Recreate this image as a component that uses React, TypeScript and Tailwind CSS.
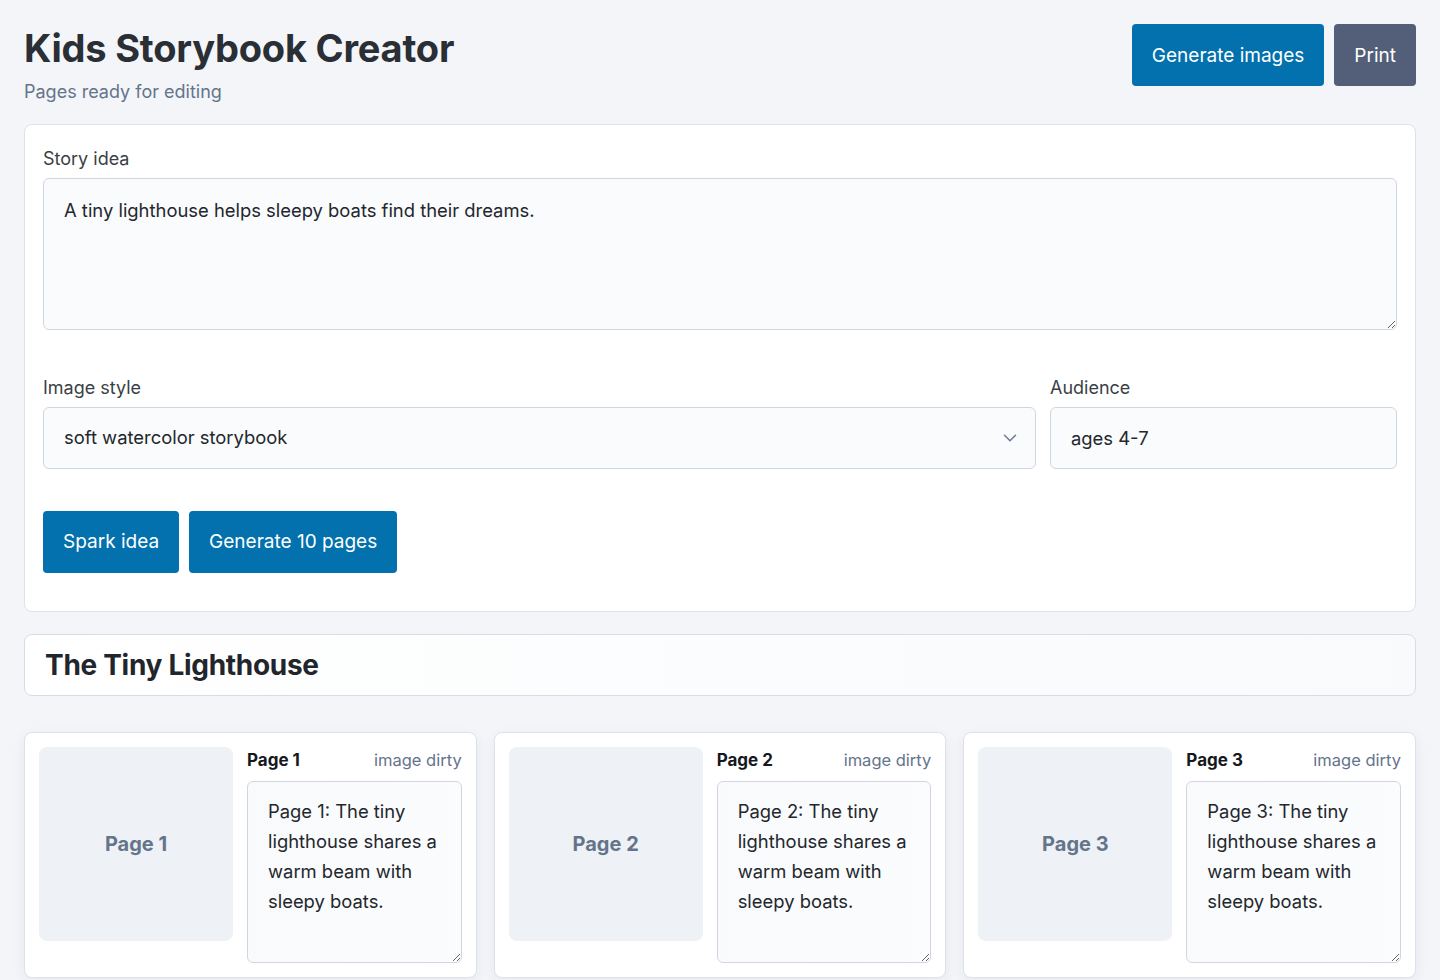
import React from "react";
import { ChevronDown } from "lucide-react";

const pages = [1, 2, 3];

const App = () => {
  return (
    <div
      className="min-h-screen bg-[#f3f5f9] px-6 pt-6 pb-10 text-[#2b3036]"
      style={{ fontFamily: "Inter, 'Noto Sans', sans-serif" }}
    >
      {/* Header */}
      <div className="flex items-start justify-between">
        <div>
          <h1 className="text-[38px] font-bold leading-[48px] tracking-[-0.2px] text-[#2a2e35]">
            Kids Storybook Creator
          </h1>
          <p className="mt-[7px] text-[18px] leading-[26px] text-[#64748b]">Pages ready for editing</p>
        </div>
        <div className="flex gap-[10px]">
          <button className="h-[62px] px-5 pt-[2px] rounded-[4px] bg-[#0271ad] text-white text-[19px]">
            Generate images
          </button>
          <button className="h-[62px] px-5 pt-[2px] rounded-[4px] bg-[#535f79] text-white text-[19px]">
            Print
          </button>
        </div>
      </div>

      {/* Story settings */}
      <div className="mt-[19px] bg-white border border-[#dde3eb] rounded-lg px-[18px] pt-5 pb-[38px]">
        <label className="block text-[18px] leading-[27px] text-[#3a3f46]">Story idea</label>
        <textarea
          className="mt-[6px] block w-full h-[152px] rounded-md border border-[#cfd6e2] bg-[#fafbfc] px-5 py-[18px] text-[18.4px] leading-[27px] text-[#23272d] outline-none"
          defaultValue="A tiny lighthouse helps sleepy boats find their dreams."
        />

        <div className="mt-[44px] flex gap-[14px]">
          <div className="flex-1">
            <label className="block text-[18px] leading-[27px] text-[#3a3f46]">Image style</label>
            <div className="relative mt-[6px]">
              <select
                className="block w-full h-[62px] appearance-none rounded-md border border-[#cfd6e2] bg-[#fafbfc] px-5 text-[18.4px] text-[#23272d] outline-none"
                defaultValue="soft watercolor storybook"
              >
                <option>soft watercolor storybook</option>
                <option>bright cartoon</option>
                <option>pencil sketch</option>
              </select>
              <ChevronDown
                className="pointer-events-none absolute right-[15px] top-1/2 -translate-y-1/2 text-[#6b7791]"
                size={22}
                strokeWidth={1.6}
              />
            </div>
          </div>
          <div className="w-[347px]">
            <label className="block text-[18px] leading-[27px] text-[#3a3f46]">Audience</label>
            <input
              className="mt-[6px] block w-full h-[62px] rounded-md border border-[#cfd6e2] bg-[#fafbfc] px-5 text-[18.4px] text-[#23272d] outline-none"
              defaultValue="ages 4-7"
            />
          </div>
        </div>

        <div className="mt-[42px] flex gap-[10px]">
          <button className="h-[62px] px-5 rounded-[4px] bg-[#0271ad] text-white text-[19px]">
            Spark idea
          </button>
          <button className="h-[62px] px-5 rounded-[4px] bg-[#0271ad] text-white text-[19px]">
            Generate 10 pages
          </button>
        </div>
      </div>

      {/* Book title */}
      <div className="mt-[22px] h-[62px] flex items-center rounded-lg border border-[#d6dde8] bg-gradient-to-r from-white to-[#f8fafc] px-5">
        <h2 className="text-[28px] font-bold leading-none tracking-[-0.3px] text-[#22262c]">
          The Tiny Lighthouse
        </h2>
      </div>

      {/* Pages */}
      <div className="mt-9 grid grid-cols-3 gap-[17px]">
        {pages.map((n) => (
          <div
            key={n}
            className="flex gap-[14px] rounded-lg border border-[#dde3eb] bg-white p-[14px] shadow-[0_4px_14px_rgba(30,41,59,0.06)]"
          >
            <div className="w-[194px] h-[194px] shrink-0 flex items-center justify-center rounded-lg bg-[#eef2f6]">
              <span className="text-[20px] font-bold text-[#64748b]">Page {n}</span>
            </div>
            <div className="flex-1 min-w-0">
              <div className="flex items-center justify-between h-[26px] pt-[1px]">
                <span className="text-[17px] font-bold text-[#15181d]">Page {n}</span>
                <span className="text-[16.5px] text-[#64748b]">image dirty</span>
              </div>
              <textarea
                className="mt-2 block w-full h-[182px] rounded-md border border-[#cfd6e2] bg-gradient-to-r from-[#f9fafb] to-[#fbfcfd] px-5 pt-[14px] pb-4 text-[18.4px] leading-[30px] text-[#23272d] outline-none"
                defaultValue={`Page ${n}: The tiny lighthouse shares a warm beam with sleepy boats.`}
              />
            </div>
          </div>
        ))}
      </div>
    </div>
  );
};

export default App;
